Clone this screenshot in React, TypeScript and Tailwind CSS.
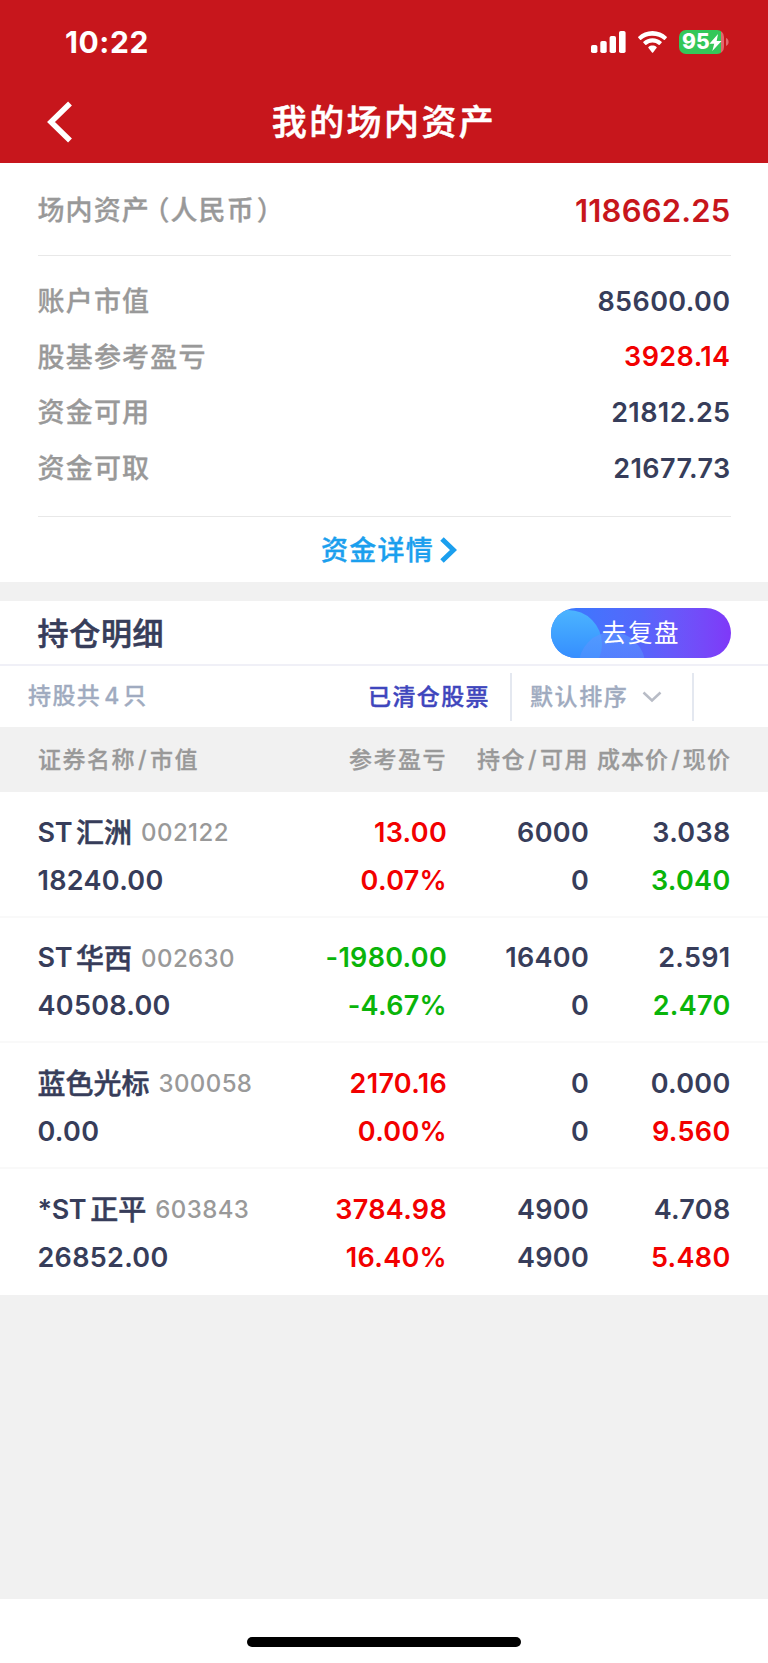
import React from 'react';

interface Holding {
  prefix?: string;
  name: string;
  code: string;
  value: string;
  profit: string;
  rate: string;
  profitColor: string;
  amount: string;
  available: string;
  cost: string;
  price: string;
  priceColor: string;
}

const RED = 'text-[#f20000]';
const GREEN = 'text-[#0ab40a]';

const summary = [
  { label: '账户市值', value: '85600.00', color: '' },
  { label: '股基参考盈亏', value: '3928.14', color: RED },
  { label: '资金可用', value: '21812.25', color: '' },
  { label: '资金可取', value: '21677.73', color: '' },
];

const holdings: Holding[] = [
  { prefix: 'ST', name: '汇洲', code: '002122', value: '18240.00', profit: '13.00', rate: '0.07%', profitColor: RED, amount: '6000', available: '0', cost: '3.038', price: '3.040', priceColor: GREEN },
  { prefix: 'ST', name: '华西', code: '002630', value: '40508.00', profit: '-1980.00', rate: '-4.67%', profitColor: GREEN, amount: '16400', available: '0', cost: '2.591', price: '2.470', priceColor: GREEN },
  { name: '蓝色光标', code: '300058', value: '0.00', profit: '2170.16', rate: '0.00%', profitColor: RED, amount: '0', available: '0', cost: '0.000', price: '9.560', priceColor: RED },
  { prefix: '*ST', name: '正平', code: '603843', value: '26852.00', profit: '3784.98', rate: '16.40%', profitColor: RED, amount: '4900', available: '4900', cost: '4.708', price: '5.480', priceColor: RED },
];

const Slash = () => <span className="mx-[2px]">/</span>;

const StatusBar = () => (
  <div className="flex h-[84px] items-center justify-between pr-[39px] pl-[65px] text-white">
    <span className="pt-px text-[30px] font-bold tracking-[0.600px]">10:22</span>
    <div className="flex items-center">
      <svg width="36" height="22" viewBox="0 0 36 22" fill="currentColor">
        <rect x="0" y="14" width="6.4" height="8" rx="1.8" />
        <rect x="9.3" y="10" width="6.4" height="12" rx="1.8" />
        <rect x="18.6" y="5" width="6.4" height="17" rx="1.8" />
        <rect x="28" y="0" width="6.6" height="22" rx="1.8" />
      </svg>
      <svg className="ml-[11px]" width="29" height="22" viewBox="0 0 29 22" fill="currentColor">
        <path d="M14.5 0C9 0 4 2.1 0.3 5.7a.8.8 0 0 0 0 1.1l1.8 1.9a.8.8 0 0 0 1.1 0A16.3 16.3 0 0 1 14.5 4.8c4.3 0 8.300 1.400 11.300 3.900a.8.8 0 0 0 1.100 0l1.800-1.900a.8.8 0 0 0 0-1.100C25 2.100 20 0 14.500 0z" />
        <path d="M14.500 7.200c-3.500 0-6.700 1.300-9.100 3.500a.8.8 0 0 0 0 1.100l1.900 1.900a.8.8 0 0 0 1.100 0 9.600 9.600 0 0 1 12.200 0 .8.8 0 0 0 1.100 0l1.900-1.900a.8.8 0 0 0 0-1.100c-2.400-2.200-5.600-3.500-9.100-3.500z" />
        <path d="M14.500 14.500c-1.500 0-2.900.5-4 1.400a.8.8 0 0 0 0 1.100l3.500 4.500a.8.8 0 0 0 1.100 0l3.400-4.500a.8.8 0 0 0 0-1.100c-1.100-.9-2.500-1.400-4-1.400z" />
      </svg>
      <div className="ml-[12px] flex h-6 w-[45px] items-center overflow-hidden rounded-[7px] bg-[linear-gradient(to_right,#34c759_94%,#e2656b_94%)] pl-[3px]">
        <span className="text-[21px] leading-6 font-extrabold">95</span>
        <svg className="-ml-px shrink-0" width="13" height="17" viewBox="0 0 12 16" fill="currentColor">
          <path d="M8.400 0 0.300 9.100h4.500L3 16l8.700-9.500H7.100z" />
        </svg>
      </div>
      <svg className="ml-[2px]" width="3" height="8" viewBox="0 0 3 8" fill="#df6a6f">
        <path d="M0 0c1.600.6 2.600 2.200 2.600 4S1.600 7.400 0 8z" />
      </svg>
    </div>
  </div>
);

const App: React.FC = () => {
  return (
    <div className="flex h-[1663px] w-[768px] flex-col bg-[#f1f1f1] font-['Inter','Noto_Sans_CJK_SC',sans-serif] text-[28px] font-medium text-[#373d5a]">
      <header className="h-[163px] shrink-0 bg-[#c7161c] text-white">
        <StatusBar />
        <div className="grid h-[76px] grid-cols-[120px_1fr_120px] items-center">
          <svg className="ml-[47px]" width="26" height="42" viewBox="0 0 26 42" fill="none" stroke="currentColor" strokeWidth="5.500">
            <path d="M23 2.500 4 21l19 18.500" />
          </svg>
          <h1 className="pt-px text-center text-[35px] tracking-[2.400px] [-webkit-text-stroke:0.500px]">我的场内资产</h1>
        </div>
      </header>

      <section className="h-[419px] shrink-0 bg-white px-[37.500px]">
        <div className="flex h-[93px] items-center justify-between border-b border-[#e8e8e8] pt-[3px]">
          <span className="flex pt-[2px] text-[27px] tracking-[1.100px] text-[#999] [-webkit-text-stroke:0.300px]">
            场内资产
            <span className="ml-[6px] [font-feature-settings:'halt']">（</span>
            人民币
            <span className="ml-[2px] [font-feature-settings:'halt']">）</span>
          </span>
          <span className="pt-px text-[31px] font-semibold tracking-[0.200px] text-[#c7161c]">118662.25</span>
        </div>
        <div className="flex h-[261px] flex-col border-b border-[#e8e8e8] pt-[17px]">
          {summary.map((item) => (
            <div key={item.label} className="flex h-[55.700px] items-center justify-between">
              <span className="pt-[3px] text-[27px] tracking-[1.200px] text-[#999] [-webkit-text-stroke:0.300px]">{item.label}</span>
              <span className={`pt-[2px] text-[27px] font-semibold tracking-[0.400px] ${item.color}`}>{item.value}</span>
            </div>
          ))}
        </div>
        <button className="flex h-[65px] w-full items-center justify-center pl-[10px] text-[27px] tracking-[1.200px] text-[#1b9fee]">
          <span className="pt-[3px] [-webkit-text-stroke:0.400px]">资金详情</span>
          <svg className="ml-[6px]" width="17" height="26" viewBox="0 0 17 26" fill="none" stroke="currentColor" strokeWidth="5">
            <path d="M2 2l11.500 11L2 24" />
          </svg>
        </button>
      </section>

      <section className="mt-[19px] shrink-0 bg-white">
        <div className="flex h-[65px] items-center justify-between border-b-2 border-[#f0f0f7] pr-[37px] pl-[37.500px]">
          <h2 className="pt-[3px] text-[31px] tracking-[0.700px] [-webkit-text-stroke:0.600px]">持仓明细</h2>
          <button className="relative h-[50px] w-[180px] overflow-hidden rounded-full bg-linear-to-r from-[#2f7dff] via-[#5566fb] to-[#7f38f8] pt-px text-[24.500px] font-normal text-white">
            <span className="absolute top-[2px] -left-[17px] size-[68px] rounded-full bg-linear-to-b from-[#4cb4ff] to-[#2f7dff]" />
            <span className="absolute top-[24px] left-[28px] size-[66px] rounded-full bg-linear-to-b from-[#5b95ff]/70 to-[#5b7dff]/20" />
            <span className="relative tracking-[1.700px]">去复盘</span>
          </button>
        </div>
        <div className="flex h-[61px] items-center pl-[28px] text-[23px] tracking-[1.400px] text-[#a0abc0]">
          <span className="[-webkit-text-stroke:0.300px]">
            持股共<span className="mr-[4px] ml-[3px] text-[23px] tracking-normal">4</span>只
          </span>
          <span className="ml-auto pt-px text-[#3f46bd] [-webkit-text-stroke:0.400px]">已清仓股票</span>
          <div className="ml-5 flex h-12 w-[184px] items-center border-x-2 border-[#e4e8f0] pl-[18px]">
            <span className="pt-px tracking-[1.600px] [-webkit-text-stroke:0.300px]">默认排序</span>
            <svg className="ml-[14px]" width="20" height="12" viewBox="0 0 20 12" fill="none" stroke="#b8bcc6" strokeWidth="2.500">
              <path d="M1.500 1.500 10 9.500l8.500-8" />
            </svg>
          </div>
          <div className="w-[74px]" />
        </div>

        <div className="grid h-[65px] grid-cols-[251px_158px_142px_142px] items-center bg-[#f1f1f1] pt-[2px] pl-[38px] text-right text-[23px] tracking-[1.500px] whitespace-nowrap text-[#999] [-webkit-text-stroke:0.300px]">
          <span className="text-left">证券名称<Slash />市值</span>
          <span>参考盈亏</span>
          <span>持仓<Slash />可用</span>
          <span className="tracking-[1.100px]">成本价<Slash />现价</span>
        </div>

        {holdings.map((item) => (
          <div key={item.code} className="grid h-[125.700px] grid-cols-[251.500px_158px_142px_141.500px] grid-rows-[48px_48px] items-center border-b-2 border-[#f9f9f9] pt-[17px] pl-[37.500px] text-right text-[27px] font-semibold tracking-[0.300px] last:border-b-0">
            <span className="flex items-center text-left whitespace-nowrap">
              {item.prefix && <span className="mr-[4px] tracking-[-0.400px]">{item.prefix}</span>}
              <span className="text-[28px] font-medium tracking-normal [-webkit-text-stroke:0.500px]">{item.name}</span>
              <span className="ml-[9px] text-[24px] font-medium tracking-[0.400px] text-[#999]">{item.code}</span>
            </span>
            <span className={item.profitColor}>{item.profit}</span>
            <span>{item.amount}</span>
            <span>{item.cost}</span>
            <span className="text-left">{item.value}</span>
            <span className={item.profitColor}>{item.rate}</span>
            <span>{item.available}</span>
            <span className={item.priceColor}>{item.price}</span>
          </div>
        ))}
      </section>

      <footer className="mt-auto flex h-[64px] shrink-0 justify-center bg-white pt-[38px]">
        <div className="h-[10px] w-[274px] rounded-full bg-black" />
      </footer>
    </div>
  );
};

export default App;
